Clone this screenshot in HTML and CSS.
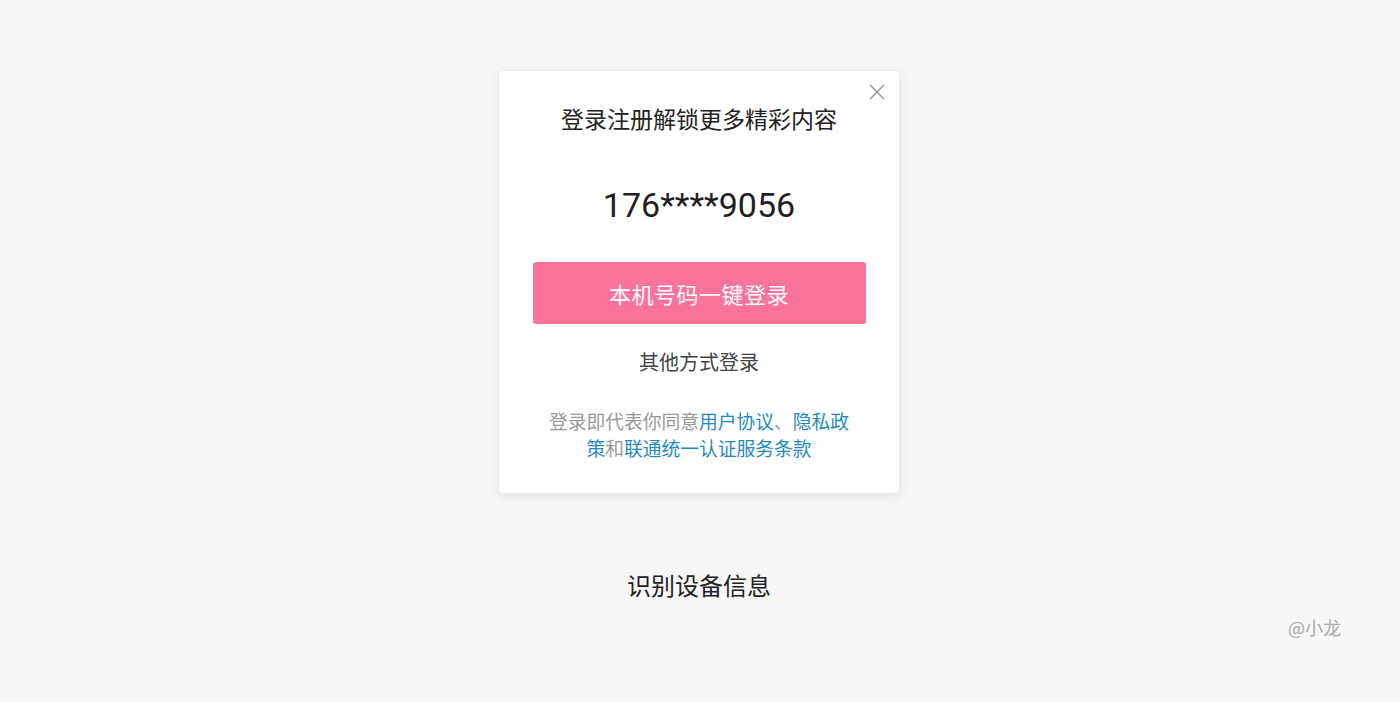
FILE: index.html
```html
<!DOCTYPE html>
<html lang="zh-CN">
<head>
    <meta charset="UTF-8">
    <meta name="viewport" content="width=device-width, initial-scale=1.0">
    <title>一键登录</title>
    <link rel="stylesheet" href="styles.css">
</head>
<body>
    <div class="page">
        <div class="login-card">
            <button class="close-btn" type="button" aria-label="关闭">
                <svg class="close-icon" viewBox="0 0 16 16">
                    <path d="M1 1L15 15"></path>
                    <path d="M15 1L1 15"></path>
                </svg>
            </button>
            <h1 class="card-title">登录注册解锁更多精彩内容</h1>
            <div class="phone-number">176****9056</div>
            <button class="login-btn" type="button">本机号码一键登录</button>
            <div class="other-login">其他方式登录</div>
            <p class="terms">登录即代表你同意<a href="#">用户协议</a>、<a href="#">隐私政策</a>和<a href="#">联通统一认证服务条款</a></p>
        </div>
        <div class="caption">识别设备信息</div>
        <div class="signature">@小龙</div>
    </div>
</body>
</html>
```

FILE: styles.css
```css
body {
    margin: 0;
    background-color: #f7f7f7; /* Light grey background */
    font-family: 'Noto Sans CJK SC', 'Noto Sans', sans-serif;
    color: #222;
}
.page {
    display: flex;
    flex-direction: column;
    align-items: center;
    height: 702px;
    padding: 71px 2px 0 0;
    box-sizing: border-box;
}
.login-card {
    position: relative;
    width: 400px;
    box-sizing: border-box;
    padding: 31px 33px 32px;
    background-color: #ffffff;
    border-radius: 4px;
    box-shadow: 0 2px 12px rgba(0, 0, 0, 0.1);
    display: flex;
    flex-direction: column;
    align-items: center;
}
.close-btn {
    position: absolute;
    top: 11px;
    right: 12px;
    width: 20px;
    height: 20px;
    padding: 2px;
    border: none;
    background: none;
    cursor: pointer;
}
.close-icon {
    width: 16px;
    height: 16px;
    display: block;
    fill: none;
    stroke: #999;
    stroke-width: 1.4;
}
.card-title {
    margin: 0;
    font-size: 23px;
    font-weight: normal;
    line-height: 32px;
    color: #222;
}
.phone-number {
    margin-top: 51px;
    font-family: Roboto, 'Noto Sans', sans-serif;
    font-size: 34px;
    line-height: 40px;
    color: #1f1f1f;
}
.login-btn {
    margin-top: 37px;
    width: 333px;
    height: 62px;
    border: none;
    border-radius: 3px;
    background-color: #fa7499; /* Pink */
    color: #fff;
    font-family: 'Noto Sans CJK SC', sans-serif;
    font-size: 22px;
    letter-spacing: 0.5px;
    cursor: pointer;
}
.other-login {
    margin-top: 24px;
    font-size: 20px;
    line-height: 28px;
    color: #444;
}
.terms {
    margin: 31px 0 0;
    width: 306px;
    text-align: center;
    font-size: 18.75px;
    line-height: 27px;
    color: #999;
}
.terms a {
    color: #1f8ac2;
    text-decoration: none;
}
.caption {
    margin-top: 76px;
    font-size: 24px;
    line-height: 32px;
    color: #222;
}
.signature {
    align-self: flex-end;
    margin-top: 14px;
    padding-right: 57px;
    font-size: 18px;
    line-height: 24px;
    color: #aaa;
}
```
